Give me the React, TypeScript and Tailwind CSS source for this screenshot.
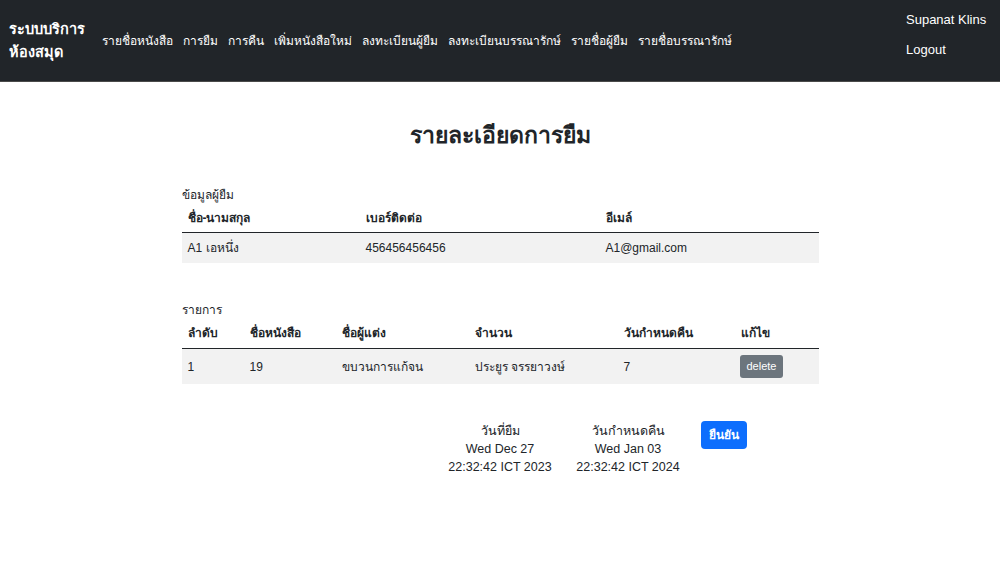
import React from "react";

// หน้ารายละเอียดการยืม (borrow detail)

const navLinks = [
  "รายชื่อหนังสือ",
  "การยืม",
  "การคืน",
  "เพิ่มหนังสือใหม่",
  "ลงทะเบียนผู้ยืม",
  "ลงทะเบียนบรรณารักษ์",
  "รายชื่อผู้ยืม",
  "รายชื่อบรรณารักษ์",
];

function Navbar() {
  return (
    <nav className="flex h-[82px] items-stretch border-b border-[#4a4a4a] bg-[#212529] text-white">
      <div className="flex flex-col justify-center pl-[9px] text-[14.5px] font-bold leading-[23px]">
        <span>ระบบบริการ</span>
        <span>ห้องสมุด</span>
      </div>
      <ul className="ml-[17px] flex items-center gap-[10px] text-[12px]">
        {navLinks.map((l) => (
          <li key={l}>{l}</li>
        ))}
      </ul>
      <div className="ml-auto flex w-[94px] flex-col pt-[12px] text-[13px] leading-[16px]">
        <span>Supanat Klins</span>
        <span className="mt-[14px]">Logout</span>
      </div>
    </nav>
  );
}

export default function App() {
  return (
    <div
      className="min-h-[579px] bg-white text-[#212529]"
      style={{ fontFamily: '"Liberation Sans", Arial, sans-serif' }}
    >
      <Navbar />
      <main className="mx-auto w-[637px]">
        <h1 className="mt-[37px] text-center text-[23px] font-bold leading-[32px]">รายละเอียดการยืม</h1>

        <p className="mt-[35px] text-[12px] leading-[18px]">ข้อมูลผู้ยืม</p>
        <table className="w-full text-[12px]">
          <thead>
            <tr className="border-b border-[#212529] font-bold">
              <th className="w-[178px] px-[6px] py-[5px] text-left font-bold">ชื่อ-นามสกุล</th>
              <th className="w-[240px] px-[6px] py-[5px] text-left font-bold">เบอร์ติดต่อ</th>
              <th className="px-[6px] py-[5px] text-left font-bold">อีเมล์</th>
            </tr>
          </thead>
          <tbody>
            <tr className="bg-[#f2f2f2]">
              <td className="px-[6px] py-[6px]">A1 เอหนึ่ง</td>
              <td className="px-[6px] py-[6px]">456456456456</td>
              <td className="px-[6px] py-[6px]">A1@gmail.com</td>
            </tr>
          </tbody>
        </table>

        <p className="mt-[38px] text-[12px] leading-[18px]">รายการ</p>
        <table className="w-full text-[12px]">
          <thead>
            <tr className="border-b border-[#212529]">
              <th className="w-[62px] px-[6px] pb-[6px] pt-[5px] text-left font-bold">ลำดับ</th>
              <th className="w-[92px] px-[6px] pb-[6px] pt-[5px] text-left font-bold">ชื่อหนังสือ</th>
              <th className="w-[133px] px-[6px] pb-[6px] pt-[5px] text-left font-bold">ชื่อผู้แต่ง</th>
              <th className="w-[149px] px-[6px] pb-[6px] pt-[5px] text-left font-bold">จำนวน</th>
              <th className="w-[117px] px-[6px] pb-[6px] pt-[5px] text-left font-bold">วันกำหนดคืน</th>
              <th className="px-[6px] pb-[6px] pt-[5px] text-left font-bold">แก้ไข</th>
            </tr>
          </thead>
          <tbody>
            <tr className="bg-[#f2f2f2]">
              <td className="px-[6px] py-[6px]">1</td>
              <td className="px-[6px] py-[6px]">19</td>
              <td className="px-[6px] py-[6px]">ขบวนการแก้จน</td>
              <td className="px-[6px] py-[6px]">ประยูร จรรยาวงษ์</td>
              <td className="px-[6px] py-[6px]">7</td>
              <td className="px-[5px] py-[6px]">
                <button
                  type="button"
                  className="rounded-[3px] bg-[#6c757d] px-[7px] py-[4px] text-[11px] leading-[15px] text-white"
                >
                  delete
                </button>
              </td>
            </tr>
          </tbody>
        </table>
      </main>

      <div className="mt-[38px] flex text-[12.5px] leading-[18px]">
        <div className="ml-[443px] w-[114px] text-center">
          <div>วันที่ยืม</div>
          <div>Wed Dec 27</div>
          <div>22:32:42 ICT 2023</div>
        </div>
        <div className="ml-[14px] w-[114px] text-center">
          <div>วันกำหนดคืน</div>
          <div>Wed Jan 03</div>
          <div>22:32:42 ICT 2024</div>
        </div>
        <div className="ml-[16px]">
          <button
            type="button"
            className="mt-[-1px] rounded-[4px] bg-[#0d6efd] px-[8px] py-[6px] text-[12px] font-bold leading-[16px] text-white"
          >
            ยืนยัน
          </button>
        </div>
      </div>
    </div>
  );
}
